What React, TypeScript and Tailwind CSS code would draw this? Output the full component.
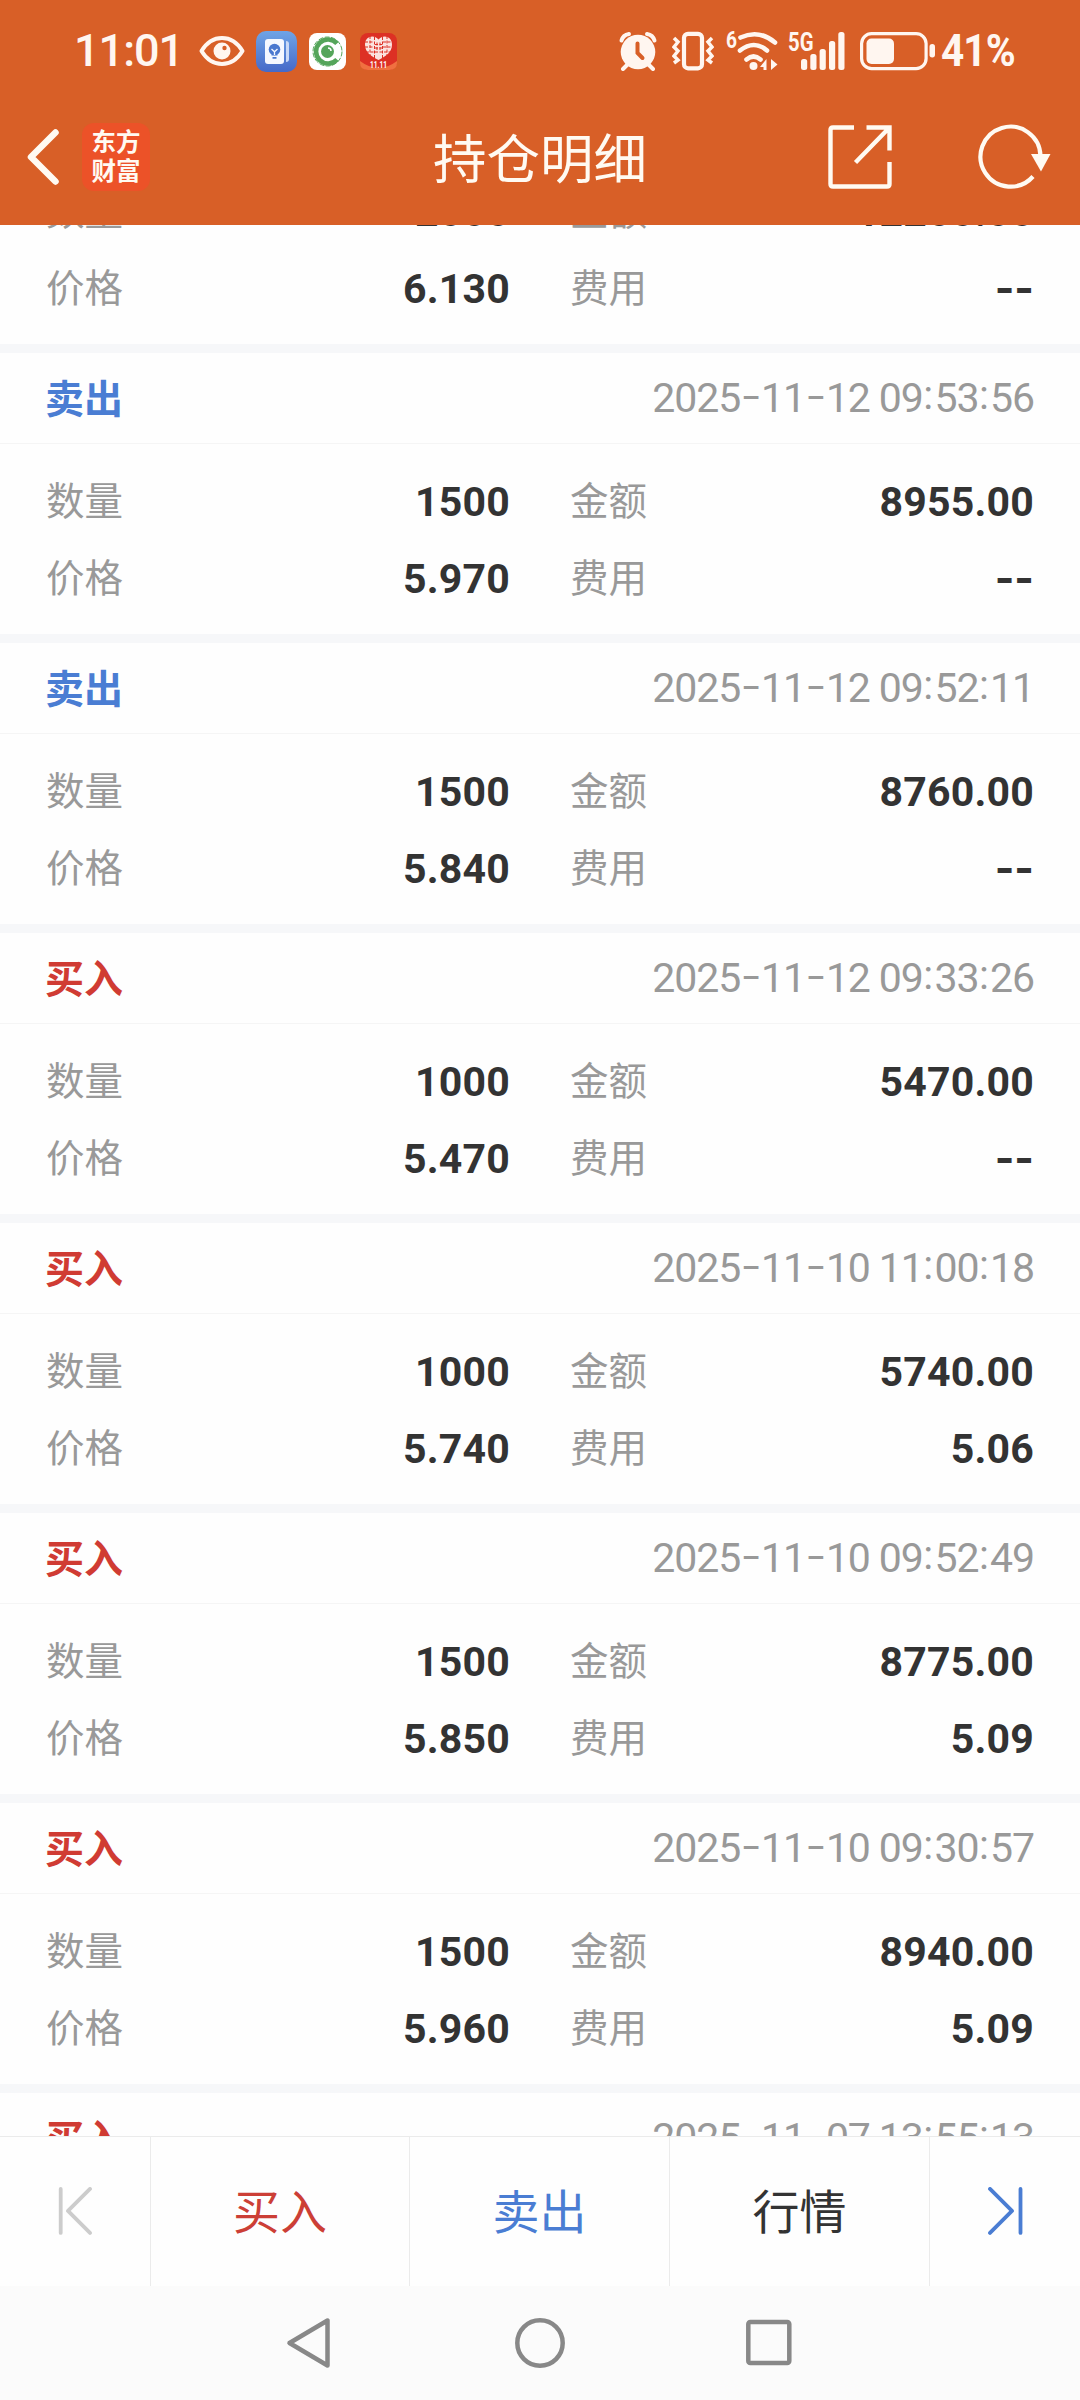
type Trade = {
  side: "买入" | "卖出"
  time: string
  qty: string
  price: string
  amount: string
  fee: string
}

const TRADES: Trade[] = [
  { side: "卖出", time: "2025-11-12 10:02:30", qty: "2000", price: "6.130", amount: "12260.00", fee: "--" },
  { side: "卖出", time: "2025-11-12 09:53:56", qty: "1500", price: "5.970", amount: "8955.00", fee: "--" },
  { side: "卖出", time: "2025-11-12 09:52:11", qty: "1500", price: "5.840", amount: "8760.00", fee: "--" },
  { side: "买入", time: "2025-11-12 09:33:26", qty: "1000", price: "5.470", amount: "5470.00", fee: "--" },
  { side: "买入", time: "2025-11-10 11:00:18", qty: "1000", price: "5.740", amount: "5740.00", fee: "5.06" },
  { side: "买入", time: "2025-11-10 09:52:49", qty: "1500", price: "5.850", amount: "8775.00", fee: "5.09" },
  { side: "买入", time: "2025-11-10 09:30:57", qty: "1500", price: "5.960", amount: "8940.00", fee: "5.09" },
  { side: "买入", time: "2025-11-07 13:55:13", qty: "1000", price: "6.010", amount: "6010.00", fee: "5.06" },
]

function StatusBar() {
  return (
    <div className="flex h-[102px] items-center text-[#fff6f0]">
      <span className="ml-[74px] w-[125px] font-['Roboto'] text-[45px] font-medium tracking-[-1px]">11:01</span>
      <svg width="46" height="32" viewBox="0 0 46 32" fill="none">
        <path d="M2.5 16C8 7 15 3 23 3s15 4 20.500 13C38 25 31 29 23 29S8 25 2.500 16Z" stroke="currentColor" strokeWidth="4" strokeLinejoin="round" />
        <circle cx="23" cy="16" r="8.500" fill="currentColor" />
        <circle cx="25.500" cy="13" r="2.200" fill="#d85f27" />
      </svg>
      <svg className="ml-[11px]" width="41" height="41" viewBox="0 0 41 41">
        <defs>
          <linearGradient id="tip" x1="0" y1="0" x2="0" y2="1">
            <stop offset="0" stopColor="#6fa4e6" />
            <stop offset="1" stopColor="#4569c8" />
          </linearGradient>
        </defs>
        <rect width="41" height="41" rx="10" fill="url(#tip)" />
        <rect x="9" y="8" width="19" height="25" rx="3" fill="#f5f8ff" />
        <path d="M30 10q3 0 3 3v15q0 3-3 3Z" fill="#c9d9f7" />
        <circle cx="18.500" cy="18.500" r="5.800" fill="#4a78cf" />
        <path d="M15.500 23h6v1.500h-6zM16.500 26h4v1.800h-4z" fill="#4a78cf" />
        <path d="m15.500 18 3 2.800 3-2.800M18.500 20.500V24" stroke="#f5f8ff" strokeWidth="1.300" fill="none" />
      </svg>
      <svg className="ml-3" width="37" height="37" viewBox="0 0 37 37" fill="none">
        <rect width="37" height="37" rx="8" fill="#fff" />
        <circle cx="18.500" cy="18.500" r="14.500" stroke="#55a55a" strokeWidth="1" strokeDasharray="5 1.500" />
        <path d="M28 10.500a12 12 0 1 0 0 16" stroke="#55a55a" strokeWidth="4.600" />
        <circle cx="18.500" cy="18.500" r="6.500" fill="#55a55a" />
        <path d="M19 15q3 0 3 3" stroke="#fff" strokeWidth="1.500" />
      </svg>
      <svg className="ml-3.5" width="37" height="37" viewBox="0 0 37 37">
        <rect width="37" height="37" rx="8" fill="#dd3024" />
        <path d="M0 28q18.500 14 37 0v2q0 7-8 7H8q-8 0-8-7Z" fill="#f07040" />
        <path d="M18.500 27C12 23.500 5 20 5 11.500 5 3 14 1 18.500 6.500 23 1 32 3 32 11.500c0 8.500-7 12-13.500 15.500Z" fill="#fbe4e0" />
        <path d="M10 3v22M27 3v22M14.500 4v21M22.500 4v21M5 9h9m9 0h9M5 14h9m9 0h9M6 19h25M15 11.500h7M15 15h7M17 9.500v8M20 9.500v8" stroke="#dd3024" strokeWidth="1" strokeDasharray="3 1.500" fill="none" />
        <text x="18.500" y="35.200" textAnchor="middle" fontFamily="Roboto" fontWeight="700" fontSize="9" fill="#fff" textLength="17" lengthAdjust="spacingAndGlyphs">11.11</text>
      </svg>

      <svg className="ml-[222px]" width="38" height="40" viewBox="0 0 38 40" fill="none" stroke="currentColor" strokeLinecap="round">
        <circle cx="19" cy="21" r="17.300" fill="currentColor" stroke="none" />
        <path d="M2.500 9.500Q4 4 10 3M35.500 9.500Q34 4 28 3" strokeWidth="4" />
        <path d="m8 34-4 4m26-4 4 4" strokeWidth="4" />
        <path d="M18.500 12.500v9.500l5 5" stroke="#d85f27" strokeWidth="4" />
      </svg>
      <svg className="ml-[15px]" width="42" height="40" viewBox="0 0 42 40" fill="none" stroke="currentColor" strokeWidth="3.500">
        <rect x="12" y="2.800" width="18" height="34.500" rx="4" strokeWidth="4.200" />
        <path d="m2 7 4 4-4 5 4 4-4 5 4 4-4 3M40 7l-4 4 4 5-4 4 4 5-4 4 4 3" />
      </svg>
      <svg className="ml-3" width="52" height="42" viewBox="0 0 52 42" fill="none" stroke="currentColor" strokeWidth="4.600">
        <text x="0" y="17.500" fontFamily="Roboto" fontWeight="700" fontSize="23" fill="currentColor" stroke="none" textLength="11" lengthAdjust="spacingAndGlyphs">6</text>
        <g strokeLinecap="round">
          <path d="M14.500 7.500Q33-1 49 12.500M14 20.500q14-11 27 0M20.500 29.500q7-6 14 0" />
        </g>
        <circle cx="27.500" cy="36" r="4" fill="currentColor" stroke="none" />
        <path d="m34 37 6.500-8v11h-3v-3ZM45 29l6.500 5.500L45 40Z" fill="currentColor" stroke="none" />
      </svg>
      <svg className="ml-[10px]" width="58" height="40" viewBox="0 0 58 40" fill="currentColor">
        <text x="0" y="20" fontFamily="Roboto" fontWeight="700" fontSize="26" textLength="25.500" lengthAdjust="spacingAndGlyphs">5G</text>
        <rect x="13" y="28" width="6.200" height="11" rx="2.500" />
        <rect x="22.300" y="23" width="6.200" height="16" rx="2.500" />
        <rect x="31.600" y="18" width="6.200" height="21" rx="2.500" />
        <rect x="41" y="10" width="6.200" height="29" rx="2.500" />
        <rect x="50.300" y="1" width="6.200" height="38" rx="2.500" />
      </svg>
      <svg className="ml-[14px]" width="76" height="40" viewBox="0 0 76 40" fill="none">
        <rect x="1.600" y="2.600" width="64.500" height="35" rx="10" stroke="currentColor" strokeWidth="3.200" />
        <rect x="6.500" y="7.500" width="27.500" height="25.500" rx="5" fill="currentColor" />
        <rect x="69.500" y="13" width="5.500" height="13.500" rx="2.700" fill="currentColor" />
      </svg>
      <span className="ml-[5px] origin-left scale-x-90 whitespace-nowrap font-['Roboto'] text-[45px] font-bold tracking-[-1px]">41%</span>
    </div>
  )
}

function TitleBar() {
  return (
    <div className="grid h-[123px] grid-cols-[1fr_auto_1fr] items-center pb-[13px] text-[#fffaf2]">
      <div className="flex items-center">
        <svg className="ml-[26px]" width="34" height="58" viewBox="0 0 34 58" fill="none">
          <path d="M29.500 4.500 5 29l24.500 24.500" stroke="currentColor" strokeWidth="6.500" strokeLinecap="round" strokeLinejoin="round" />
        </svg>
        <div className="ml-[22px] flex size-[68px] flex-col items-center justify-center rounded-xl bg-[#ec5228] pb-[4px] text-[24.5px] font-bold leading-[29px]">
          <span>东方</span>
          <span>财富</span>
        </div>
      </div>
      <h1 className="pb-[2px] text-[53.5px]">持仓明细</h1>
      <div className="flex items-center justify-end pr-[29px]">
        <svg width="64" height="64" viewBox="0 0 64 64" fill="none" stroke="currentColor" strokeWidth="4.400">
          <path d="M26 2.500H5q-2.500 0-2.500 2.500v54q0 2.500 2.500 2.500h54q2.500 0 2.500-2.500V37" />
          <path d="M38.500 2.500h23v23M61 3 27.500 37.500" />
        </svg>
        <svg className="ml-[86px]" width="73" height="66" viewBox="0 0 73 66" fill="none">
          <path d="M55 52.500A30 30 0 1 1 62.500 32" stroke="currentColor" strokeWidth="4.200" />
          <path d="M53 30h19.500l-9.500 17.500Z" fill="currentColor" />
        </svg>
      </div>
    </div>
  )
}

// hyphens and colons sit wider than Roboto's own, so they get separate spans
function TimeText({ value }: { value: string }) {
  return (
    <span className="whitespace-pre pb-px font-['Roboto'] text-[41px] leading-[52px] tracking-[-1.1px] text-[#999]">
      {value.split(/([-:])/).map((part, i) => {
        if (part === "-") return <span key={i} className="font-['Inter'] text-[48px] font-light leading-none tracking-[-0.8px]">-</span>
        if (part === ":") return <span key={i} className="relative -top-[3px] px-[0.5px] tracking-[0.8px]">:</span>
        return part
      })}
    </span>
  )
}

function Field({ label, value }: { label: string; value: string }) {
  return (
    <div className="flex h-[77px] items-center justify-between">
      <span className="pb-[5px] text-[38.5px]">{label}</span>
      {value === "--" ? (
        <span className="pb-[3px] font-['Inter'] text-[42px] font-bold text-[#333]">--</span>
      ) : (
        <span className="pt-[3px] font-['Roboto'] text-[41px] font-bold tracking-[0.2px] text-[#333]">{value}</span>
      )}
    </div>
  )
}

function TradeCard({ trade }: { trade: Trade }) {
  const color = trade.side === "买入" ? "text-[#d03b33]" : "text-[#4a7dd3]"
  return (
    <li className="h-[290px] border-b-[9px] border-[#f6f7f9]">
      <div className="flex h-[91px] items-center justify-between border-b border-[#f5f5f5] px-[46px]">
        <span className={`-ml-px pb-[4px] text-[39px] font-bold ${color}`}>{trade.side}</span>
        <TimeText value={trade.time} />
      </div>
      <div className="grid grid-cols-2 gap-x-[60px] px-[46px] pt-[19px] text-[#999]">
        <Field label="数量" value={trade.qty} />
        <Field label="金额" value={trade.amount} />
        <Field label="价格" value={trade.price} />
        <Field label="费用" value={trade.fee} />
      </div>
    </li>
  )
}

function ActionBar() {
  return (
    <div className="grid h-[150px] shrink-0 grid-cols-[151px_259px_260px_260px_150px] divide-x divide-[#ebebeb] border-t border-[#ebebeb] text-[47px]">
      <button className="flex items-center pl-[58px] text-[#ccc]">
        <svg width="36" height="50" viewBox="0 0 36 50" fill="none" stroke="currentColor" strokeWidth="3.800" strokeLinecap="round" strokeLinejoin="round">
          <path d="M2.700 1.900v44M32 1.900l-22 22 22 22" />
        </svg>
      </button>
      <button className="pb-[5px] text-[#cc3f36]">买入</button>
      <button className="pb-[5px] text-[#4a7dd3]">卖出</button>
      <button className="pb-[5px] text-[#333]">行情</button>
      <button className="flex items-center pl-[57px] text-[#4a7dd3]">
        <svg width="36" height="50" viewBox="0 0 36 50" fill="none" stroke="currentColor" strokeWidth="3.800" strokeLinecap="round" strokeLinejoin="round">
          <path d="M33.500 1.900v44M3 1.900l22 22-22 22" />
        </svg>
      </button>
    </div>
  )
}

function NavBar() {
  return (
    <div className="flex h-[114px] shrink-0 items-start bg-[#fbfbfb] pl-[286px] pt-[31px] text-[#888]">
      <svg width="46" height="52" viewBox="0 0 46 52" fill="none">
        <path d="M41.500 3.500v45L3.500 26Z" stroke="currentColor" strokeWidth="4.500" strokeLinejoin="round" />
      </svg>
      <svg className="ml-[182px]" width="52" height="52" viewBox="0 0 52 52" fill="none">
        <circle cx="26" cy="26" r="22.700" stroke="currentColor" strokeWidth="4.500" />
      </svg>
      <svg className="ml-[179px]" width="48" height="52" viewBox="0 0 48 52" fill="none">
        <rect x="3.300" y="5" width="41" height="41" rx="2" stroke="currentColor" strokeWidth="4.500" />
      </svg>
    </div>
  )
}

export default function App() {
  return (
    <div className="flex h-[2400px] w-[1080px] flex-col overflow-hidden bg-[#fefefe] font-['Noto_Sans_CJK_SC',sans-serif]">
      <header className="h-[225px] shrink-0 bg-[#d85f27]">
        <StatusBar />
        <TitleBar />
      </header>
      <main className="h-[1911px] shrink-0 overflow-hidden">
        <ul className="-mt-[162px]">
          {TRADES.map((t) => (
            <TradeCard key={t.time} trade={t} />
          ))}
        </ul>
      </main>
      <ActionBar />
      <NavBar />
    </div>
  )
}
